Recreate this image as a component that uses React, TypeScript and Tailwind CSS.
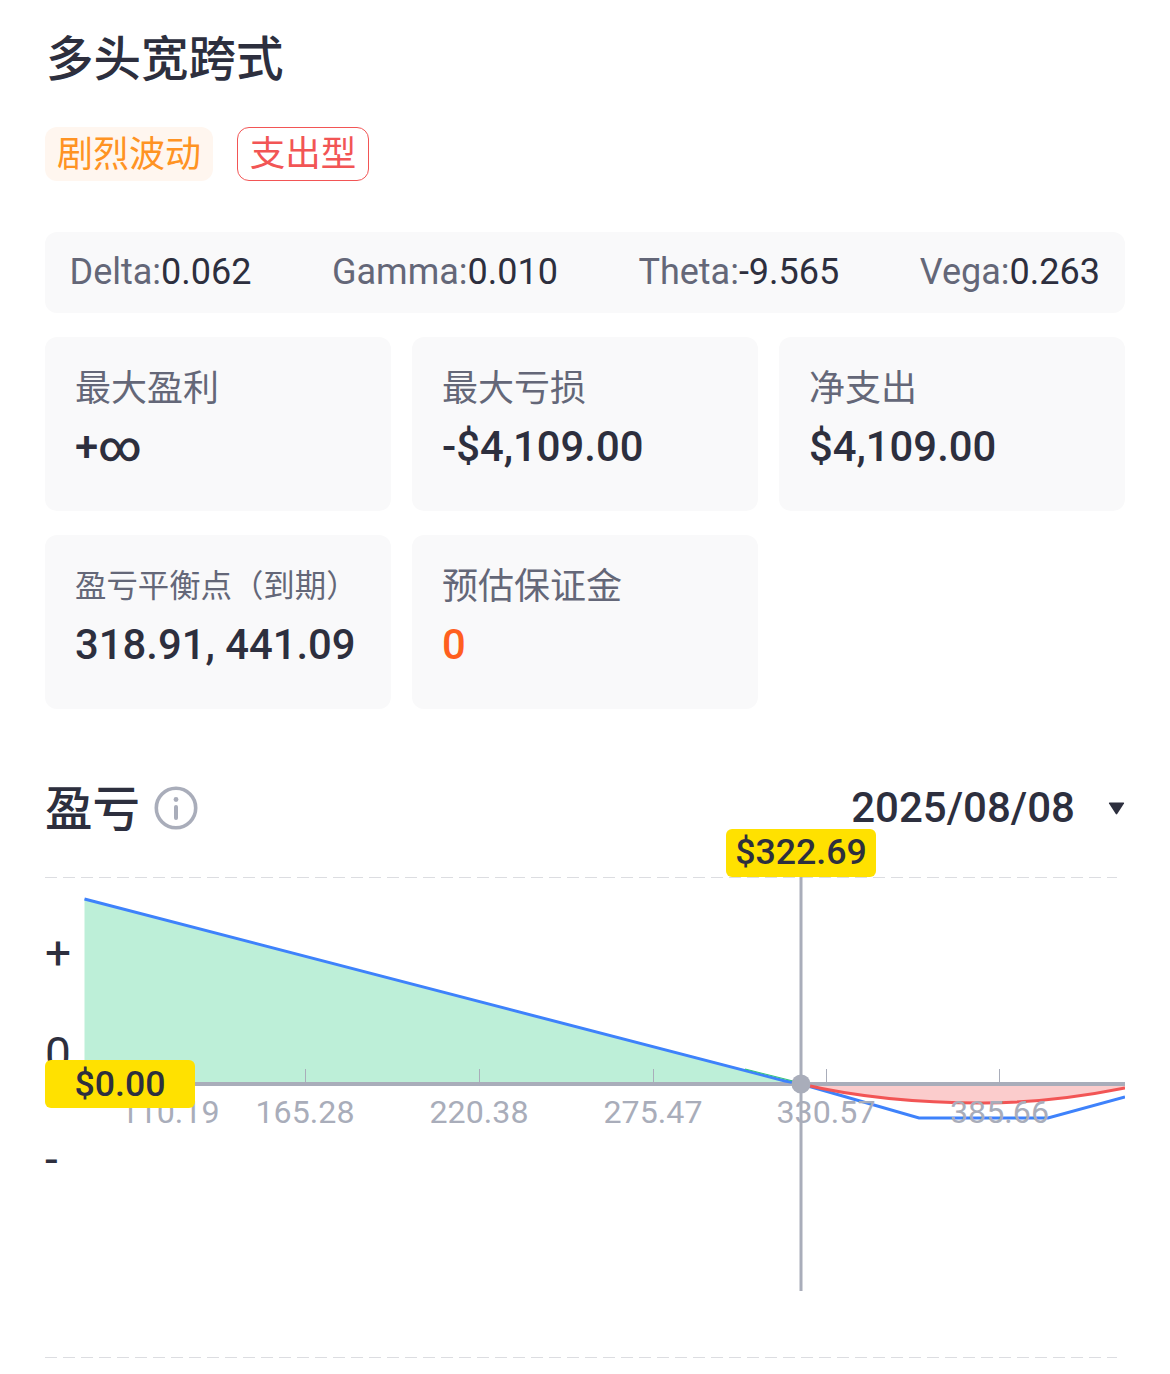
import React from "react";

const FONT = "font-['Roboto','Noto_Sans_CJK_SC',sans-serif]";

function Card({ label, value, small, accent }: { label: string; value: string; small?: boolean; accent?: boolean }) {
  return (
    <div className="h-[174px] rounded-[12px] bg-[#f9f9fa] pl-[30px] pt-[28px]">
      <div className={`${small ? "text-[31.4px]" : "text-[36px]"} h-[48px] leading-[48px] text-[#646778]`}>{label}</div>
      <div className={`mt-[9px] text-[41.8px] leading-[50px] font-medium ${accent ? "text-[#ff5f1f]" : "text-[#2d2f3e]"}`}>{value}</div>
    </div>
  );
}

export default function App() {
  return (
    <div className={`${FONT} h-[1374px] w-[1170px] overflow-hidden bg-white px-[45px] pt-[32px]`}>
      <h1 className="pl-[1px] text-[47.5px] leading-[56px] font-medium text-[#2d2f3e]">多头宽跨式</h1>

      <div className="mt-[39px] flex gap-[24px]">
        <span className="flex h-[54px] items-center rounded-[12px] bg-[#fff6ef] px-[12px] pt-[1px] text-[36px] text-[#ff9323]">剧烈波动</span>
        <span className="flex h-[54px] w-[132px] items-center justify-center rounded-[12px] border border-[#f25555] pt-[1px] text-[35.5px] text-[#f25555]">支出型</span>
      </div>

      <div className="mt-[51px] flex h-[81px] items-center justify-between rounded-[12px] bg-[#f9f9fa] pb-[1px] pl-[24.5px] pr-[25px] text-[36px] text-[#646778]">
        <span>Delta:<span className="text-[#2d2f3e]">0.062</span></span>
        <span>Gamma:<span className="text-[#2d2f3e]">0.010</span></span>
        <span>Theta:<span className="text-[#2d2f3e]">-9.565</span></span>
        <span>Vega:<span className="text-[#2d2f3e]">0.263</span></span>
      </div>

      <div className="mt-[24px] grid grid-cols-3 gap-x-[21px] gap-y-[24px]">
        <Card label="最大盈利" value="+∞" />
        <Card label="最大亏损" value="-$4,109.00" />
        <Card label="净支出" value="$4,109.00" />
        <Card label="盈亏平衡点（到期）" value="318.91, 441.09" small />
        <Card label="预估保证金" value="0" accent />
      </div>

      <div className="mt-[69px] flex h-[60px] items-center justify-between">
        <div className="flex items-center gap-[14px]">
          <span className="pt-[3px] text-[47.5px] leading-[60px] font-medium text-[#2d2f3e]">盈亏</span>
          <svg width="44" height="44" viewBox="0 0 44 44" fill="none">
            <circle cx="22" cy="22" r="19.7" stroke="#a9adba" strokeWidth="3.6" />
            <circle cx="22" cy="13.5" r="2.4" fill="#a9adba" />
            <rect x="20" y="19" width="4" height="15" rx="2" fill="#a9adba" />
          </svg>
        </div>
        <div className="flex items-center gap-[33px]">
          <span className="text-[42px] leading-[60px] font-medium text-[#2d2f3e]">2025/08/08</span>
          <svg width="17" height="13" viewBox="0 0 17 13"><path d="M1 1.5a.7.7 0 0 1 .6-1h13.8a.7.7 0 0 1 .6 1L9.2 12a.9.9 0 0 1-1.4 0z" fill="#2d2f3e" /></svg>
        </div>
      </div>

      <div className="relative mt-[39px] h-[480px] w-[1080px]">
        <svg className="absolute inset-0" width="1080" height="490" viewBox="0 0 1080 490">
          <line x1="0" y1="0.5" x2="1072" y2="0.5" stroke="#dcdde1" strokeWidth="1" strokeDasharray="12 6" />
          <line x1="0" y1="480.5" x2="1072" y2="480.5" stroke="#dcdde1" strokeWidth="1" strokeDasharray="12 6" />

          <polygon points="39.5,22 756,207 39.5,207" fill="#bdefd8" />
          <path d="M756,207 C820,222 880,226 938,226 C985,226 1035,220 1080,211 L1080,207 Z" fill="#fbcccc" />

          <line x1="39" y1="207" x2="1080" y2="207" stroke="#a9adba" strokeWidth="4" />
          {[260, 434, 608, 781, 954].map((x) => (
            <line key={x} x1={x + 0.5} y1="192" x2={x + 0.5} y2="206" stroke="#a9adba" strokeWidth="1" />
          ))}

          <path d="M39.5,22 L740,204 L756,207" fill="none" stroke="#3e82fb" strokeWidth="3" />
          <path d="M700,192 L756,206" fill="none" stroke="#2fc27c" strokeWidth="1.2" />
          <path d="M756,207 L874,241 L1003,241 L1080,220" fill="none" stroke="#3e82fb" strokeWidth="3" />
          <path d="M756,207 C820,222 880,226 938,226 C985,226 1035,220 1080,211" fill="none" stroke="#f25555" strokeWidth="3" />

          <g fill="#a9adba" fontSize="32.2" textAnchor="middle">
            <text x="125" y="246">110.19</text>
            <text x="260" y="246">165.28</text>
            <text x="434" y="246">220.38</text>
            <text x="608" y="246">275.47</text>
            <text x="781" y="246">330.57</text>
            <text x="954.5" y="246">385.66</text>
          </g>

          <line x1="756" y1="0" x2="756" y2="414" stroke="#a9adba" strokeWidth="3" />
          <circle cx="756" cy="207" r="9.5" fill="#a9adba" />

          <g fill="#2d2f3e" fontSize="46" fontWeight="400">
            <text x="0" y="92">+</text>
            <text x="0" y="193">0</text>
            <text x="0" y="298">-</text>
          </g>
        </svg>

        <div className="absolute left-[681px] top-[-48px] flex h-[48px] w-[150px] items-center justify-center rounded-[6px] bg-[#ffe100] text-[35.7px] font-medium text-[#2d2f3e]">$322.69</div>
        <div className="absolute left-0 top-[183px] flex h-[48px] w-[150px] items-center justify-center rounded-[6px] bg-[#ffe100] pt-[1px] text-[35.7px] font-medium text-[#2d2f3e]">$0.00</div>
      </div>
    </div>
  );
}
